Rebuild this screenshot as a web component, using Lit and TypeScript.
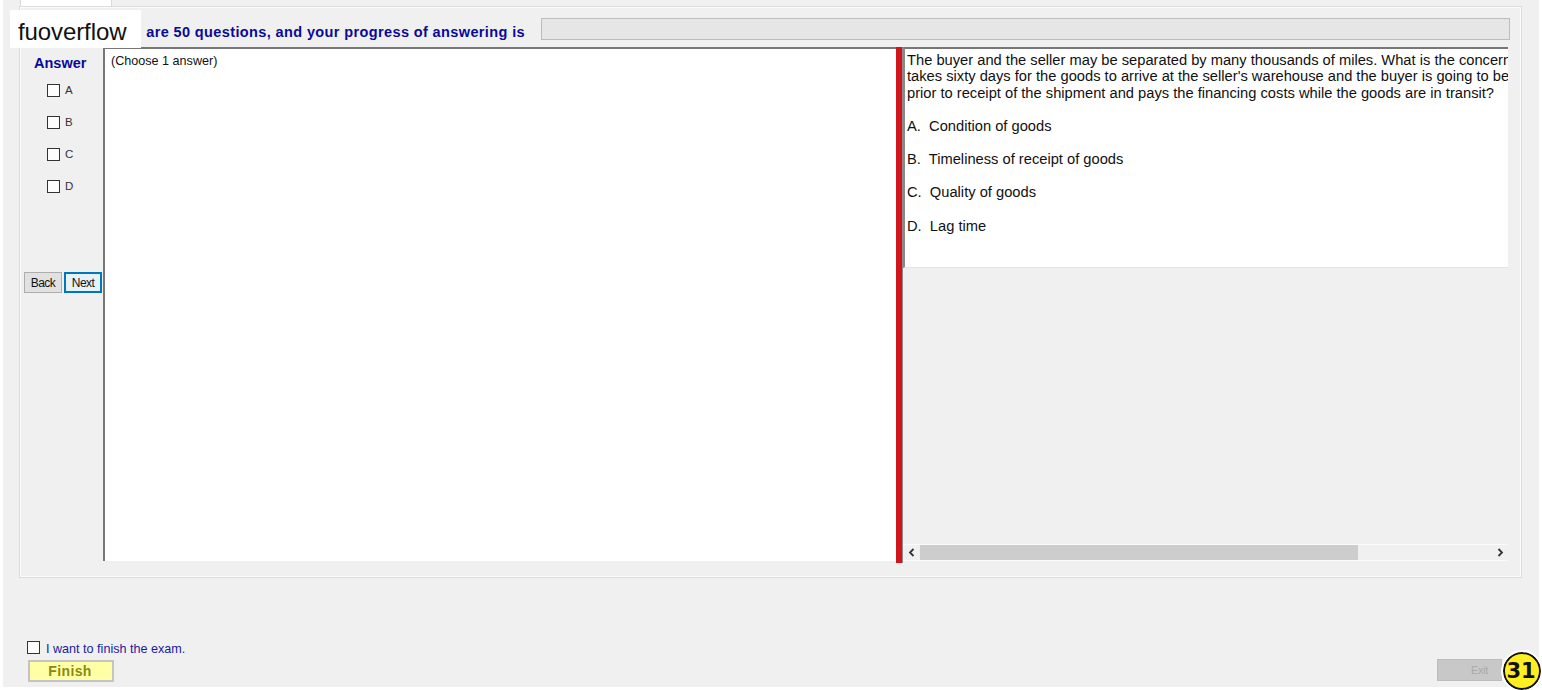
import { LitElement, html, css } from "lit";
import { customElement } from "lit/decorators.js";

@customElement("app-root")
export class AppRoot extends LitElement {
  static styles = css`
    :host { display: block; width: 1542px; height: 690px; background: #fff; overflow: hidden; position: relative; font-family: "Liberation Sans", Arial, sans-serif; color: #000; }
    .window { width: 1536px; height: 687px; margin-left: 3px; background: #f0f0f0; display: flex; flex-direction: column; }
    .tab { width: 92px; height: 6px; margin-left: 17px; background: #fff; border-right: 1px solid #d9d9d9; border-left: 1px solid #d9d9d9; box-sizing: border-box; flex: none; }
    .panel { width: 1503px; height: 572px; margin-left: 16px; box-sizing: border-box; border: 1px solid #dcdcdc; box-shadow: inset 0 0 0 1px #fbfbfb; padding: 11px 11px 13px 4px; display: flex; flex-direction: column; flex: none; }
    .head { height: 22px; display: flex; align-items: center; flex: none; }
    .q { width: 517px; flex: none; font-weight: 700; font-size: 14.5px; letter-spacing: 0.38px; color: #0a0a96; text-align: right; padding: 6px 16px 0 0; box-sizing: border-box; white-space: nowrap; }
    .progress { width: 969px; height: 22px; box-sizing: border-box; background: #e6e6e6; border: 1px solid #bcbcbc; }
    .content { margin-top: 7px; height: 514px; display: flex; flex: none; }
    .side { width: 79px; flex: none; display: flex; flex-direction: column; }
    .ans { font-weight: 700; font-size: 14.5px; color: #0a0a96; margin: 8px 0 0 10px; line-height: 16px; }
    .opts { display: flex; flex-direction: column; gap: 16px; margin: 11px 0 0 23px; height: 190px; }
    .opt { display: flex; align-items: center; gap: 5px; height: 16px; font-size: 11.5px; color: #333; }
    .cb { width: 13px; height: 13px; box-sizing: border-box; border: 1px solid #333; background: #fdfdfd; flex: none; }
    .btns { display: flex; gap: 2px; }
    .btn { width: 38px; height: 21px; box-sizing: border-box; border: 1px solid #adadad; background: #e1e1e1; font-size: 12px; letter-spacing: -0.6px; color: #111; display: flex; align-items: center; justify-content: center; }
    .btn.on { border: 2px solid #0078b8; background: #e5f1fb; }
    .left { width: 793px; flex: none; box-sizing: border-box; background: #fff; border-top: 2px solid #777; border-left: 2px solid #777; padding: 5px 0 0 6px; font-size: 12.6px; line-height: 14px; color: #111; }
    .split { width: 6px; flex: none; background: #d2141c; border-right: 1px solid #8a8a8a; margin-bottom: -2px; }
    .right { width: 605px; flex: none; display: flex; flex-direction: column; }
    .doc { height: 221px; flex: none; box-sizing: border-box; background: #fff; border-top: 2px solid #777; border-left: 2px solid #8a8a8a; border-bottom: 1px solid #e4e4e4; padding: 2.7px 0 0 2px; font-size: 14.7px; line-height: 16.6px; overflow: hidden; white-space: nowrap; color: #111; }
    .doc p { margin: 0; }
    .doc .o { margin-top: 16.6px; }
    .fill { flex: 1; }
    .sb { height: 15px; flex: none; display: flex; align-items: center; background: #f0f0f0; border-top: 1px solid #fbfbfb; border-bottom: 1px solid #fbfbfb; }
    .arr { width: 17px; height: 15px; flex: none; display: flex; align-items: center; justify-content: center; }
    .arr svg { display: block; }
    .track { flex: 1; height: 15px; }
    .thumb { width: 438px; height: 15px; background: #cdcdcd; }
    .foot { flex: 1; padding: 62px 0 0 24px; display: flex; justify-content: space-between; }
    .foot-l { display: flex; flex-direction: column; }
    .want { display: flex; align-items: center; gap: 6px; font-size: 12.6px; color: #1a1aa0; height: 18px; }
    .want .cb { margin-top: -4px; }
    .finish { margin: 2px 0 0 1px; width: 86px; height: 22px; box-sizing: border-box; border: 2px solid #c4c4c4; background: #ffffa6; color: #8a8a10; font-weight: 700; font-size: 14px; letter-spacing: 0.4px; display: flex; align-items: center; justify-content: center; padding: 0 2px 0 0; }
    .exit { margin: 19px 37px 0 0; width: 65px; height: 22px; background: #c8c8c8; border: 1px solid #bdbdbd; box-sizing: border-box; color: #aaa; font-size: 11px; letter-spacing: -0.3px; display: flex; align-items: center; justify-content: center; padding-left: 20px; }
    .mark { position: absolute; left: 10px; top: 10px; width: 131px; height: 38px; background: #fff; font-size: 24px; letter-spacing: -0.1px; line-height: 44px; padding-left: 8px; box-sizing: border-box; color: #111; }
    .badge { position: absolute; left: 1503px; top: 652px; width: 38px; height: 38px; box-sizing: border-box; border-radius: 50%; background: #ffee22; border: 2px solid #111; font: 700 21px/34px "DejaVu Sans", sans-serif; text-align: center; color: #111; padding-right: 2px; outline: 2px solid #fff; }
  `;

  render() {
    return html`
      <div class="window">
        <div class="tab"></div>
        <div class="panel">
          <div class="head">
            <div class="q">are 50 questions, and your progress of answering is</div>
            <div class="progress"></div>
          </div>
          <div class="content">
            <div class="side">
              <div class="ans">Answer</div>
              <div class="opts">
                ${["A", "B", "C", "D"].map((l) => html`<div class="opt"><div class="cb"></div><span>${l}</span></div>`)}
              </div>
              <div class="btns">
                <div class="btn">Back</div>
                <div class="btn on">Next</div>
              </div>
            </div>
            <div class="left">(Choose 1 answer)</div>
            <div class="split"></div>
            <div class="right">
              <div class="doc">
                <p>The buyer and the seller may be separated by many thousands of miles. What is the concern</p>
                <p>takes sixty days for the goods to arrive at the seller's warehouse and the buyer is going to be</p>
                <p>prior to receipt of the shipment and pays the financing costs while the goods are in transit?</p>
                <p class="o">A.&nbsp; Condition of goods</p>
                <p class="o">B.&nbsp; Timeliness of receipt of goods</p>
                <p class="o">C.&nbsp; Quality of goods</p>
                <p class="o">D.&nbsp; Lag time</p>
              </div>
              <div class="fill"></div>
              <div class="sb">
                <div class="arr"><svg width="8" height="9" viewBox="0 0 8 9"><path d="M5.500 1 2 4.500 5.500 8" fill="none" stroke="#333" stroke-width="1.8"/></svg></div>
                <div class="track"><div class="thumb"></div></div>
                <div class="arr"><svg width="8" height="9" viewBox="0 0 8 9"><path d="M2.500 1 6 4.500 2.500 8" fill="none" stroke="#333" stroke-width="1.8"/></svg></div>
              </div>
            </div>
          </div>
        </div>
        <div class="foot">
          <div class="foot-l">
            <div class="want"><div class="cb"></div>I want to finish the exam.</div>
            <div class="finish">Finish</div>
          </div>
          <div class="exit">Exit</div>
        </div>
      </div>
      <div class="mark">fuoverflow</div>
      <div class="badge">31</div>
    `;
  }
}
